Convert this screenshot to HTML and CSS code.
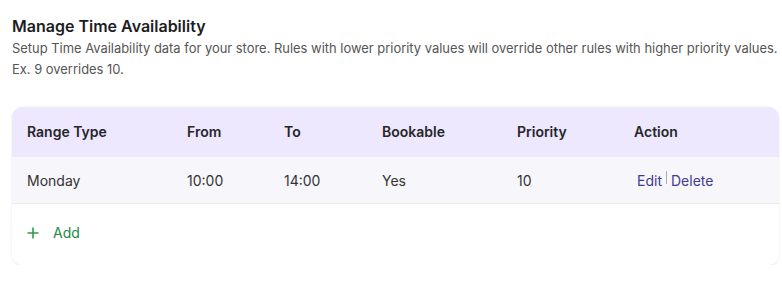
FILE: index.html
```html
<!DOCTYPE html>
<html lang="en">
<head>
<meta charset="utf-8">
<title>Manage Time Availability</title>
<link rel="stylesheet" href="styles.css">
</head>
<body>
<div class="page">
  <h2 class="title">Manage Time Availability</h2>
  <p class="desc">Setup Time Availability data for your store. Rules with lower priority values will override other rules with higher priority values. Ex. 9 overrides 10.</p>
  <div class="card">
    <div class="row head">
      <div class="c c1">Range Type</div>
      <div class="c c2">From</div>
      <div class="c c3">To</div>
      <div class="c c4">Bookable</div>
      <div class="c c5">Priority</div>
      <div class="c c6">Action</div>
    </div>
    <div class="row body">
      <div class="c c1">Monday</div>
      <div class="c c2">10:00</div>
      <div class="c c3">14:00</div>
      <div class="c c4">Yes</div>
      <div class="c c5">10</div>
      <div class="c c6 actions"><a class="link">Edit</a><span class="sep"></span><a class="link">Delete</a></div>
    </div>
    <div class="add">
      <svg class="plus" width="12" height="12" viewBox="0 0 12 12"><path d="M6 0.5V11.5M0.5 6H11.5" stroke="#2f9a4c" stroke-width="1.6" fill="none"/></svg>
      <span>Add</span>
    </div>
  </div>
</div>
</body>
</html>
```
FILE: styles.css
```css
* { box-sizing: border-box; }
html, body { margin: 0; padding: 0; background: #fff; }
body { font-family: Inter, "Noto Sans", sans-serif; color: #222; }
.page { padding: 15px 0 0 12px; }
.title { margin: 0; font-size: 16px; font-weight: 600; line-height: 22px; color: #1d1d1f; }
.desc { margin: 1px 0 0; font-size: 12.93px; line-height: 21px; color: #555; }
.card {
  margin-top: 27px;
  margin-right: 3px;
  border-radius: 10px;
  background: #fff;
  box-shadow: 0 1px 3px rgba(0,0,0,0.08);
  overflow: hidden;
}
.row { display: grid; grid-template-columns: 160px 97px 98px 135px 117px 1fr; padding-left: 15px; align-items: center; font-size: 14px; }
.head { height: 50px; padding-bottom: 1px; background: #ede8fd; font-weight: 600; color: #26262a; }
.body { height: 47px; background: #f7f6fb; border-bottom: 1px solid #ecebef; color: #333; }
.actions { display: flex; align-items: center; padding-left: 3px; }
.link { color: #3f3b8f; cursor: pointer; }
.sep { width: 1px; height: 13px; background: #aaa; margin: -5px 4px 0 4px; }
.add { display: flex; align-items: center; height: 61px; padding-left: 15px; padding-bottom: 4px; color: #22893f; font-size: 14px; }
.plus { margin-right: 14px; }
```
